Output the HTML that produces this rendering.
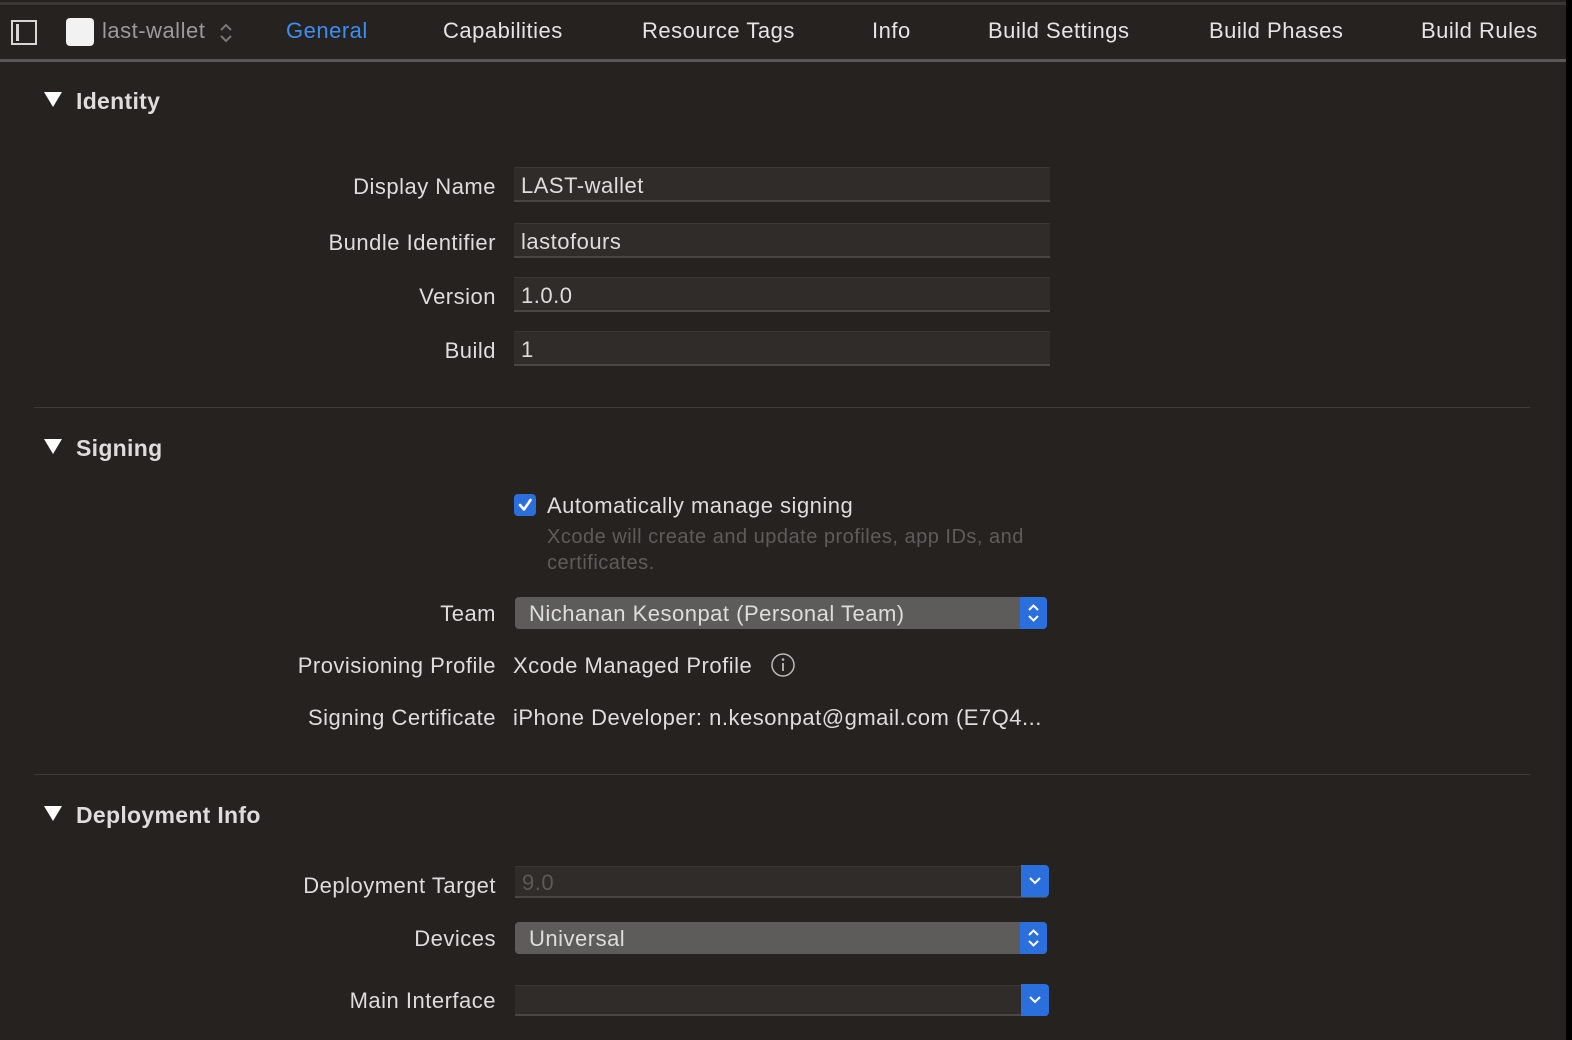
<!DOCTYPE html>
<html><head><meta charset="utf-8"><style>
*{margin:0;padding:0;box-sizing:border-box}
body{width:1572px;height:1040px;background:#252220;font-family:"Liberation Sans",sans-serif;color:#dfdddb;position:relative;overflow:hidden;font-size:22px;letter-spacing:0.5px}
.a{position:absolute;white-space:nowrap}
.lbl{position:absolute;right:1076px;white-space:nowrap;margin-top:1px}
.fld{position:absolute;left:514px;width:536px;height:35px;background:#302c29;border-top:1px solid #3a3633;border-bottom:2px solid #4a4643;padding-left:7px;line-height:35px}
.pop{position:absolute;left:515px;width:532px;height:32px;background:#5e5c5a;border-radius:4px;padding-left:14px;line-height:33px}
.btn{position:absolute;right:0;top:0;width:27px;height:100%;background:#2a6fdb;border-radius:0 4px 4px 0}
.hdr{position:absolute;left:44px;font-weight:bold;font-size:23px;letter-spacing:0.3px}
.tri{display:inline-block;width:0;height:0;border-left:9px solid transparent;border-right:9px solid transparent;border-top:15px solid #fff;margin-right:14px;vertical-align:2px}
.sep{position:absolute;left:34px;width:1496px;height:1px;background:#3e3b38}
.tab{position:absolute;top:18px;font-size:22px;color:#e6e4e2}
</style></head><body>
<div class="a" style="left:0;top:2px;width:1566px;height:3px;background:#3a3735"></div>
<div class="a" style="left:0;top:59px;width:1566px;height:3px;background:#5a5856"></div>
<div class="a" style="left:1566px;top:0;width:6px;height:1040px;background:#000"></div>
<div class="a" style="left:11px;top:20px;width:26px;height:25px;border:2px solid #d8d6d4"></div>
<div class="a" style="left:16px;top:24px;width:3px;height:17px;background:#d8d6d4"></div>
<div class="a" style="left:66px;top:18px;width:28px;height:28px;background:#f2f2f2;border-radius:4px"></div>
<div class="tab" style="left:102px;color:#9c9a98">last-wallet</div>
<svg class="a" style="left:218px;top:21px" width="16" height="24"><path d="M3 9 L8 4 L13 9 M3 15 L8 20 L13 15" stroke="#7a7876" stroke-width="2" fill="none"/></svg>
<div class="tab" style="left:286px;color:#3d8ef0">General</div>
<div class="tab" style="left:443px">Capabilities</div>
<div class="tab" style="left:642px">Resource Tags</div>
<div class="tab" style="left:872px">Info</div>
<div class="tab" style="left:988px">Build Settings</div>
<div class="tab" style="left:1209px">Build Phases</div>
<div class="tab" style="left:1421px">Build Rules</div>

<div class="hdr" style="top:88px"><span class="tri"></span>Identity</div>
<div class="lbl" style="top:173px">Display Name</div><div class="fld" style="top:167px">LAST-wallet</div>
<div class="lbl" style="top:229px">Bundle Identifier</div><div class="fld" style="top:223px">lastofours</div>
<div class="lbl" style="top:283px">Version</div><div class="fld" style="top:277px">1.0.0</div>
<div class="lbl" style="top:337px">Build</div><div class="fld" style="top:331px">1</div>
<div class="sep" style="top:407px"></div>

<div class="hdr" style="top:435px"><span class="tri"></span>Signing</div>
<div class="a" style="left:514px;top:494px;width:22px;height:22px;background:#2a6fdb;border-radius:4px"></div>
<svg class="a" style="left:514px;top:494px" width="22" height="22"><path d="M6 11 L10 15.5 L16.5 6" stroke="#fff" stroke-width="2.6" fill="none" stroke-linecap="round" stroke-linejoin="round"/></svg>
<div class="a" style="left:547px;top:493px">Automatically manage signing</div>
<div class="a" style="left:547px;top:524px;font-size:20px;color:#5f5c5a;line-height:26px">Xcode will create and update profiles, app IDs, and<br>certificates.</div>
<div class="lbl" style="top:600px">Team</div>
<div class="pop" style="top:597px">Nichanan Kesonpat (Personal Team)<div class="btn"><svg width="27" height="32"><path d="M9 13 L13.5 8.5 L18 13 M9 19 L13.5 23.5 L18 19" stroke="#fff" stroke-width="2" fill="none"/></svg></div></div>
<div class="lbl" style="top:652px">Provisioning Profile</div>
<div class="a" style="left:513px;top:653px">Xcode Managed Profile</div>
<svg class="a" style="left:770px;top:652px" width="26" height="26"><circle cx="13" cy="13" r="11" stroke="#bdbbb9" stroke-width="1.5" fill="none"/><path d="M13 11 V19" stroke="#bdbbb9" stroke-width="1.8"/><circle cx="13" cy="7.5" r="1.3" fill="#bdbbb9"/></svg>
<div class="lbl" style="top:704px">Signing Certificate</div>
<div class="a" style="left:513px;top:705px">iPhone Developer: n.kesonpat@gmail.com (E7Q4...</div>
<div class="sep" style="top:774px"></div>

<div class="hdr" style="top:802px"><span class="tri"></span>Deployment Info</div>
<div class="lbl" style="top:872px">Deployment Target</div>
<div class="fld" style="top:866px;left:515px;width:532px;height:32px;line-height:32px;color:#5c5957">9.0<div class="btn" style="right:-2px;top:-2px;height:32px;width:28px"><svg width="28" height="32"><path d="M9 13 L14 18 L19 13" stroke="#fff" stroke-width="2" fill="none"/></svg></div></div>
<div class="lbl" style="top:925px">Devices</div>
<div class="pop" style="top:922px">Universal<div class="btn"><svg width="27" height="32"><path d="M9 13 L13.5 8.5 L18 13 M9 19 L13.5 23.5 L18 19" stroke="#fff" stroke-width="2" fill="none"/></svg></div></div>
<div class="lbl" style="top:987px">Main Interface</div>
<div class="fld" style="top:985px;left:515px;width:532px;height:31px"><div class="btn" style="right:-2px;top:-2px;height:32px;width:28px"><svg width="28" height="32"><path d="M9 13 L14 18 L19 13" stroke="#fff" stroke-width="2" fill="none"/></svg></div></div>
</body></html>
